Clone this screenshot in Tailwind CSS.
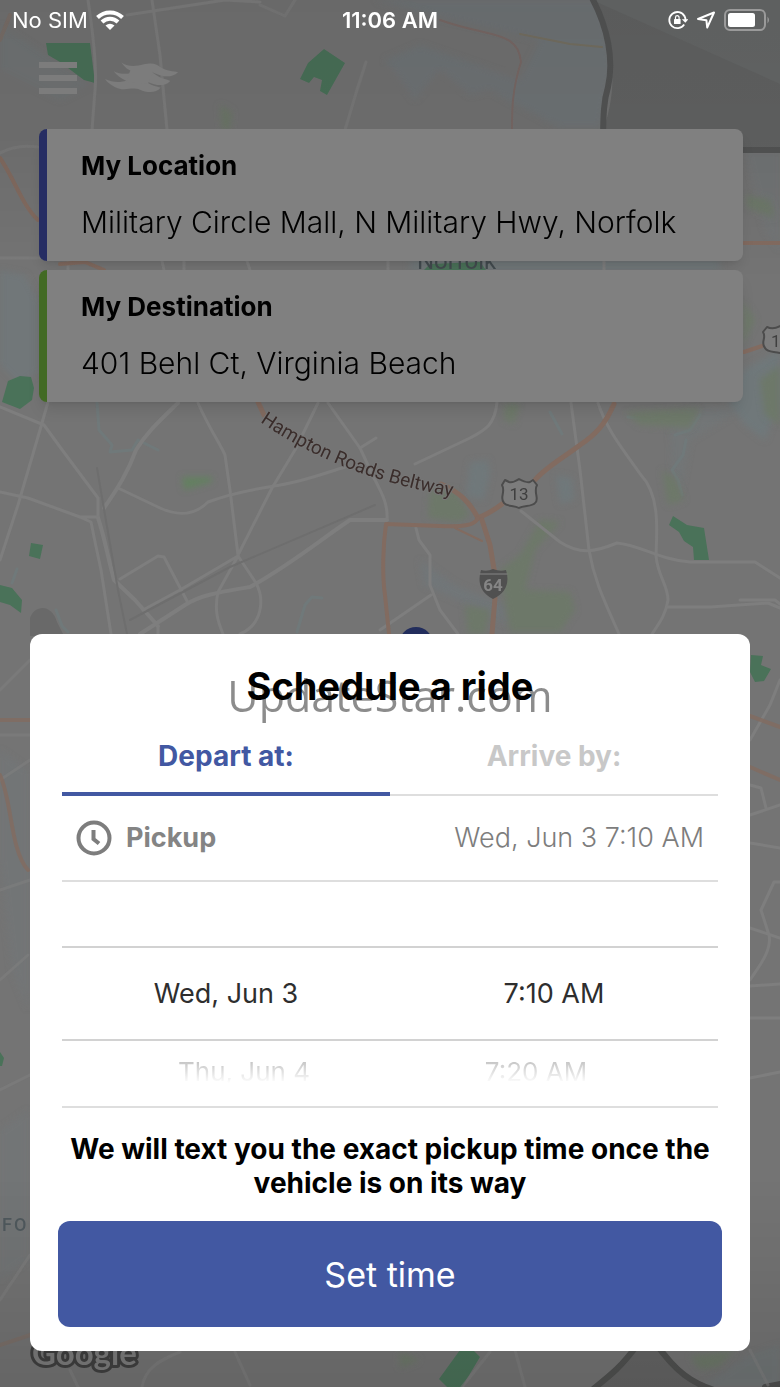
<!DOCTYPE html>
<html lang="en">
<head>
  <meta charset="UTF-8" />
  <meta name="viewport" content="width=device-width, initial-scale=1.0"/>
  <title>Schedule a ride</title>
  <script src="https://cdn.jsdelivr.net/npm/@tailwindcss/browser@4"></script>
</head>
<body class="relative min-h-screen overflow-x-hidden bg-[#717171] font-['Inter',sans-serif] text-black">

  <!-- Map -->
  <svg class="absolute inset-0 w-full h-full" viewBox="0 0 780 1387" preserveAspectRatio="xMidYMin slice" fill="none" stroke-linecap="round" stroke-linejoin="round" aria-hidden="true">
    <defs>
      <linearGradient id="shade" x1="0" y1="0" x2="0" y2="1">
        <stop offset="0" stop-color="#000" stop-opacity=".09"/>
        <stop offset=".1" stop-color="#000" stop-opacity=".07"/>
        <stop offset=".2" stop-color="#000" stop-opacity="0"/>
        <stop offset=".85" stop-color="#000" stop-opacity="0"/>
        <stop offset="1" stop-color="#000" stop-opacity=".12"/>
      </linearGradient>
      <filter id="soft" x="-20%" y="-20%" width="140%" height="140%"><feGaussianBlur stdDeviation="3"/></filter>
      <path id="beltway" d="M260 422 Q300 449 345 467 T450 496"/>
    </defs>
    <rect width="780" height="1387" fill="#747474"/>

    <!-- Water -->
    <g fill="#70787a" filter="url(#soft)">
      <path d="M0 25 L30 45 L90 85 L60 100 L0 70Z" opacity=".5"/>
      <path d="M375 0 H602 L612 70 L600 128 H560 L490 90 L470 95 L440 70 L415 100 L385 60 L420 45 L520 80 L540 40 L450 20Z" opacity=".7"/>
      <path d="M0 270 L25 275 L38 300 V372 L20 385 L0 365Z" opacity=".8"/>
      <path d="M745 150 H780 V250 L765 230Z" opacity=".4"/>
      <path d="M743 370 L780 350 V400 L765 440 L745 425 L728 402Z"/>
      <path d="M670 415 L705 408 L740 410 L690 440 L680 495 L672 470Z" opacity=".5"/>
      <path d="M470 462 L488 460 L490 475 L484 500 L466 496Z"/>
      <path d="M556 475 L572 478 L574 500 L560 504Z"/>
      <path d="M420 560 L455 585 L505 605 L508 625 L480 610 L424 585Z" opacity=".7"/>
      <path d="M700 1387 L750 1355 L780 1345 V1387Z" opacity=".6"/>
      <path d="M0 750 L28 770 V1010 L12 970 L0 860Z" opacity=".4"/>
      <path d="M0 1130 L28 1110 V1260 L0 1280Z" opacity=".4"/>
      <path d="M410 261 H720 V270 H410Z"/>
    </g>
    <g stroke="#70797a" stroke-width="3">
      <path d="M97 403 L99 430 L112 445 L110 452 L132 450 L138 440 L158 450"/>
      <path d="M297 632 L305 605 L312 597 L322 598"/>
      <path d="M550 412 L562 434"/>
      <path d="M628 417 L650 420 L668 414 M675 435 L690 430 L700 415 M686 440 L683 455 L672 470 L678 480 L682 495"/>
      <path d="M12 583 L17 569 M56 610 L62 626 L68 632"/>
    </g>

    <!-- Restricted area -->
    <path d="M592 0 C612 35 620 80 604 128 L604 150 H780 V0Z" fill="#636464"/>
    <path d="M592 0 L780 84 V0Z" fill="#676969"/>
    <path d="M592 -2 C608 28 614 60 608 87 C604 100 603 112 603 150 H780" stroke="#545555" stroke-width="6"/>
    <path d="M30 618 C35 604 52 604 57 622 L64 636 H30Z" fill="#696969"/>
    <path d="M598 1387 C612 1376 622 1366 636 1346 H662 C680 1372 696 1383 714 1390Z" fill="#646464"/>
    <path d="M592 1390 C612 1374 622 1366 638 1344 M656 1344 C676 1372 692 1383 714 1390 M765 1387 L785 1383" stroke="#505150" stroke-width="6"/>

    <!-- Parks -->
    <g fill="#6d7869" filter="url(#soft)">
      <path d="M182 477 H212 V482 L184 490Z" fill="#648060"/>
      <path d="M430 490 L455 490 L470 515 L458 522 L428 518Z"/>
      <path d="M505 404 H520 L514 424 L504 420Z"/>
      <path d="M540 520 L560 522 L535 550 L525 590 L570 592 L575 610 L560 632 H510 L500 570 L520 555Z"/>
      <path d="M662 470 L675 478 L684 500 L668 505Z M625 412 L700 408 L690 428 L640 425Z"/>
      <path d="M745 195 L770 200 L775 218 L748 208Z M743 300 L755 320 L743 345Z M760 380 L780 365 V425 L765 415Z"/>
      <path d="M690 1356 L735 1350 L720 1366 L700 1370Z M400 1352 L420 1360 L400 1368Z"/>
      <path d="M220 105 L232 112 L230 130 H222Z M465 605 L490 610 L485 634 H468Z"/>
    </g>
    <g fill="#4a7259">
      <path d="M46 43 H90 L95 83 L84 80 L60 62 L48 55Z"/>
      <path d="M324 49 L345 63 L327 95 L320 91 L322 80 L314 77 L309 83 L300 79 L308 63Z"/>
      <path d="M8 381 L20 376 L31 377 L34 388 L32 400 L20 409 L2 402Z"/>
      <path d="M31 543 L43 545 L40 559 L29 556Z"/>
      <path d="M0 585 L12 588 L22 600 L21 613 L10 605 L0 602Z"/>
      <path d="M673 516 L687 525 L704 528 L709 560 H694 L693 547 L684 541 L679 532 L669 525Z"/>
      <path d="M751 655 L763 656 L761 665 L771 669 L764 681 L755 682 L750 672Z"/>
      <path d="M460 1350 H473 L480 1357 L462 1387 H447 L439 1379Z"/>
      <path d="M424 270 L430 264 L480 262 L486 270Z"/>
      <path d="M0 1052 L4 1058 L2 1066 H0Z"/>
    </g>

    <!-- Streets -->
    <g stroke="#7e7e7e" stroke-width="3">
      <path d="M88 0 C94 40 97 70 95 90 L92 130 M152 0 L160 55 L167 130 M127 15 L225 0 L260 2"/>
      <path d="M260 5 L285 16 L295 0 M366 62 L357 90 L345 130 M0 153 Q16 144 38 147 M0 258 H40" opacity=".7"/>
      <path d="M68 261 V270 M162 261 L164 270 M184 261 V270 M247 261 L250 270 M388 261 V270 M604 261 V270"/>
      <path d="M48 402 L40 430 L18 505 L0 560 M0 407 L44 425 L60 447 L98 498 V518"/>
      <path d="M178 403 C155 425 145 435 136 450 C128 472 118 488 104 508" stroke-width="4"/>
      <path d="M0 492 L28 498 L80 517 H98 M80 517 L91 522 L94 537 L101 570 L111 634"/>
      <path d="M98 518 C104 535 108 558 114 580 L135 600 L158 626" stroke-width="4"/>
      <path d="M118 488 L160 508 C180 517 195 515 208 502 C240 490 265 488 280 485 C305 481 325 473 345 467"/>
      <path d="M198 403 C210 430 218 440 225 455 L230 490 L238 555 M318 403 L295 450 L272 488 L238 555 M328 403 L360 448 L374 478"/>
      <path d="M374 478 C383 495 388 505 387 520 M360 448 L376 438"/>
      <path d="M387 520 L350 520 C320 540 290 565 250 587 C220 592 200 595 185 605 L140 634" stroke-width="4"/>
      <path d="M120 579 L158 556 L164 557 L187 601 M143 610 L180 590 L238 556 L256 583 C265 600 262 625 240 634 M238 556 L218 592 C214 610 218 622 223 634 M158 626 V634"/>
      <path d="M497 402 C495 425 485 430 470 438 L415 464 M571 403 L580 470 L589 550 C594 580 604 600 619 634 M598 403 C607 430 622 448 641 475 C660 495 657 530 656 555 C657 575 668 585 668 600 C666 615 658 625 652 634"/>
      <path d="M521 511 L560 542 C580 555 595 552 617 543 C640 545 660 560 690 562 H755 L780 578 M668 607 H710 L768 603 L780 608"/>
      <path d="M416 528 L419 540 L430 555 V585 L440 610 L458 634 M431 595 L380 630"/>
      <path d="M740 600 H775 L780 604 M780 680 L770 705 L750 740 M750 785 L761 788 L766 808 M750 815 L780 805 M750 843 L780 848 M780 882 H774 L761 910 L769 935 C772 950 760 965 750 980 M750 928 L780 938 M750 986 L780 984 M750 1018 H780 M750 1078 L780 1072"/>
      <path d="M0 690 L30 660 M0 735 H30 M0 780 L30 760 M0 890 L30 880 M0 980 L28 955 M0 1090 L30 1075 M0 1300 L30 1255 M70 1370 L78 1387 M142 1387 C145 1368 160 1360 180 1352 M235 1352 L250 1385 M515 1350 L525 1387 M750 1350 L768 1385 M490 1352 L462 1387" opacity=".6"/>
    </g>
    <g stroke="#6e6e6e" stroke-width="2">
      <path d="M97 468 L105 515 L118 590 L127 634 M130 620 L230 567 L375 505"/>
    </g>

    <!-- Highways -->
    <g stroke="#826b60" stroke-width="4">
      <path d="M0 158 C15 180 22 205 38 220 M60 264 L85 262 L104 270 M744 243 H780 M744 352 L762 346"/>
      <path d="M0 40 L10 15" opacity=".5"/>
      <path d="M258 402 L264 415 M441 484 C460 492 470 503 478 518" stroke-width="5"/>
      <path d="M614 404 C605 425 595 435 580 445 C560 460 545 468 535 480 M502 504 C492 512 485 515 478 518" stroke-width="5"/>
      <path d="M478 518 C475 525 465 527 440 526 L386 524 C383 545 382 575 385 595 L389 634"/>
      <path d="M482 520 L490 545 L495 575 M495 598 L492 634" stroke-width="5"/>
      <path d="M455 528 L482 541" stroke-width="2"/>
      <path d="M750 716 L780 727 M750 767 L780 780 M0 720 H30 M0 775 C12 800 10 850 28 870" opacity=".8"/>
      <path d="M0 1345 L60 1325" opacity=".5"/>
    </g>
    <path d="M440 20 C490 38 518 30 521 62 C512 90 512 110 512 130" stroke="#7a6a67" stroke-width="2"/>
    <path d="M520 34 L570 44 L602 47" stroke="#767163" stroke-width="2"/>
    <rect width="780" height="1387" fill="url(#shade)"/>

    <!-- Labels -->
    <g font-family="Roboto, sans-serif">
      <text font-size="19" fill="#3a2d2b" stroke="#777" stroke-width="2" paint-order="stroke"><textPath href="#beltway">Hampton Roads Beltway</textPath></text>
      <text x="417" y="269" font-size="24" fill="#434b4f">Norfolk</text>
      <text x="2" y="1231" font-size="18" font-weight="500" fill="#4d565a" letter-spacing="2">FO</text>
      <path d="M505 480 L509 482 Q513 483 519 479 Q526 483 530 482 L533 480 L537 485 C533 492 540 500 535 503 C532 507 524 505 519 508 C514 505 507 507 504 503 C499 498 506 492 502 485Z" fill="#7c7c7c" stroke="#4c4c4c" stroke-width="2"/>
      <text x="519" y="500" font-size="17" text-anchor="middle" fill="#3f3f3f">13</text>
      <path d="M767 327 Q773 330 780 326 L800 340 L780 353 C774 351 768 353 765 348 C760 342 767 338 763 332Z" fill="#7c7c7c" stroke="#4c4c4c" stroke-width="2"/>
      <text x="771" y="347" font-size="17" fill="#3f3f3f">1</text>
      <path d="M481 570 Q487 572 493 569 Q500 572 506 570 Q512 590 493 599 Q475 590 481 570Z" fill="#505050"/>
      <path d="M480 574 H507" stroke="#858585" stroke-width="1"/>
      <text x="493" y="591" font-size="17" font-weight="700" text-anchor="middle" fill="#858585">64</text>
      <text x="32" y="1365" font-family="Lato, sans-serif" font-size="33" font-weight="700" fill="#6f6f6f" stroke="#393939" stroke-width="6" paint-order="stroke">Google</text>
    </g>
    <circle cx="416" cy="644" r="17" fill="#222d5c"/>
  </svg>

  <div class="relative">
    <!-- Status bar -->
    <div class="grid grid-cols-3 items-center h-10 px-3 text-[22px] text-white">
      <div class="flex items-center gap-2">
        <span>No SIM</span>
        <svg class="w-7 h-5" viewBox="0 0 28 20" fill="none" stroke="#fff" stroke-width="4">
          <path d="M1.500 7.500 A18 18 0 0 1 26.500 7.500"/>
          <path d="M6 12 A11.500 11.500 0 0 1 22 12"/>
          <path d="M14 20 L9.500 15.500 Q14 11.800 18.500 15.500Z" fill="#fff" stroke="none"/>
        </svg>
      </div>
      <div class="text-center font-semibold">11:06 AM</div>
      <div class="flex justify-end items-center gap-2">
        <svg class="w-5 h-5" viewBox="0 0 20 20" fill="none" stroke="#fff" stroke-width="1.800">
          <path d="M16.500 6.200 A8.100 8.100 0 1 0 16.200 14.500"/>
          <path d="M17.300 12.700 L13.800 9.200 H20.400Z" fill="#fff" stroke="none"/>
          <path d="M16.500 6 Q17.500 8 17.500 10"/>
          <rect x="6" y="9" width="6.600" height="5" rx=".6" fill="#fff" stroke="none"/>
          <path d="M7.500 9.500 V7.500 A1.800 1.800 0 0 1 11.100 7.500 V9.500" stroke-width="1.200"/>
        </svg>
        <svg class="w-5 h-5" viewBox="0 0 20 20" fill="none" stroke="#fff" stroke-width="2" stroke-linejoin="round">
          <path d="M18 2.500 L11.200 17.500 L10.400 10.200 L2 9Z"/>
        </svg>
        <svg class="w-12 h-6 -mr-1" viewBox="0 0 48 24" fill="none">
          <rect x="1" y="2" width="40" height="20" rx="5" stroke="#9a9a9a" stroke-width="2"/>
          <rect x="4" y="5" width="27" height="14" rx="2.500" fill="#fff"/>
          <path d="M43.500 8.500 Q46.500 12 43.500 15.500Z" fill="#9a9a9a"/>
        </svg>
      </div>
    </div>

    <!-- Top bar -->
    <header class="flex items-center gap-7 px-[39px] pt-5 pb-[33px]">
      <button type="button" aria-label="Menu" class="flex flex-col justify-between w-[38px] h-8 my-[2px]">
        <span class="w-full h-[6px] bg-[#7c7c7c]"></span>
        <span class="w-full h-[6px] bg-[#7c7c7c]"></span>
        <span class="w-full h-[6px] bg-[#7c7c7c]"></span>
      </button>
      <svg class="w-[74px] h-8" viewBox="0 0 76 32" fill="#7c7c7c" aria-hidden="true">
        <path d="M17 0 C24 5 32 4 40 2 C47 0 53 1 57 5 C63 9 70 9 75 10 C68 16 60 15 51 11 C43 8 36 12 30 10 C24 8 20 5 17 0Z"/>
        <path d="M9 9 C17 13 25 12 33 9 C41 7 46 8 51 12 C57 17 62 17 67 19 C61 25 53 24 44 20 C36 17 28 21 22 19 C16 16 12 13 9 9Z"/>
        <path d="M0 17 C8 21 16 21 24 18 C32 15 38 16 43 20 C47 24 53 24 57 26 C52 32 43 31 36 28 C28 25 22 29 15 27 C8 25 3 21 0 17Z"/>
        <path d="M26 8 L50 8 L44 22 L22 20Z"/>
      </svg>
    </header>

    <!-- Trip addresses -->
    <section class="flex flex-col gap-[9px] ml-[39px] mr-[37px]">
      <div class="flex flex-col gap-4 h-[132px] pl-[34px] pr-6 pt-[21px] bg-[#808080] border-l-8 border-[#262d63] rounded-lg shadow-lg">
        <label for="location" class="text-[26px] leading-8 font-bold">My Location</label>
        <input id="location" type="text" readonly value="Military Circle Mall, N Military Hwy, Norfolk" class="w-full text-[30px] leading-12 font-light outline-none" />
      </div>
      <div class="flex flex-col gap-4 h-[132px] pl-[34px] pr-6 pt-[21px] bg-[#808080] border-l-8 border-[#426a24] rounded-lg shadow-lg">
        <label for="destination" class="text-[26px] leading-8 font-bold">My Destination</label>
        <input id="destination" type="text" readonly value="401 Behl Ct, Virginia Beach" class="w-full text-[30px] leading-12 font-light outline-none" />
      </div>
    </section>

    <!-- Schedule dialog -->
    <main role="dialog" aria-labelledby="dialogTitle" class="relative mt-[232px] mx-[30px] px-7 pt-8 pb-6 bg-white rounded-xl">
      <h1 id="dialogTitle" class="text-[38px] leading-10 font-bold text-center">Schedule a ride</h1>
      <div class="absolute inset-x-0 top-8 text-center font-['Open_Sans',sans-serif] text-[43px] leading-[60px] text-black/45 pointer-events-none">UpdateStar.com</div>

      <div class="mx-1">
        <div class="grid grid-cols-2 mt-[13px] text-[28px] leading-10 font-bold">
          <button type="button" id="departTab" onclick="selectTab('depart')" class="h-[77px] pt-1 pb-1 border-b-4 border-[#4258a2] text-[#4258a2]">Depart at:</button>
          <button type="button" id="arriveTab" onclick="selectTab('arrive')" class="h-[77px] pt-1 pb-[6px] border-b-2 border-[#dedede] text-[#c8c8c8]">Arrive by:</button>
        </div>

        <div class="flex items-center h-[86px] px-[14px] border-b-2 border-[#dedede] text-[27px]">
          <svg class="w-9 h-9 mr-[14px]" viewBox="0 0 36 36" fill="none" stroke="#7d7d7d" stroke-width="4">
            <circle cx="18" cy="18" r="15.500"/>
            <path d="M17.500 10 V19 L23 23.500"/>
          </svg>
          <span class="font-bold text-[#848484]">Pickup</span>
          <span class="ml-auto font-light text-[#7d7d7d]">Wed, Jun 3 7:10 AM</span>
        </div>

        <!-- Time wheel -->
        <div class="border-b-2 border-[#dedede] text-center">
          <div class="h-16"></div>
          <div class="grid grid-cols-2 items-center h-[95px] pt-[2px] border-y-2 border-[#d2d2d2] text-[27px] text-[#2e2e2e]">
            <span>Wed, Jun 3</span>
            <span>7:10 AM</span>
          </div>
          <div class="grid grid-cols-2 items-center h-[65px] pb-1 text-[26px] leading-8">
            <span class="pl-9 bg-linear-to-b from-[#b8b8b8] to-white to-85% bg-clip-text text-transparent">Thu, Jun 4</span>
            <span class="pr-9 bg-linear-to-b from-[#b8b8b8] to-white to-85% bg-clip-text text-transparent">7:20 AM</span>
          </div>
        </div>

        <p class="mt-6 text-[28px] leading-[34px] font-bold text-center">We will text you the exact pickup time once the vehicle is on its way</p>
      </div>

      <button type="button" class="w-full h-[106px] mt-[21px] rounded-xl bg-[#4258a2] text-[34px] text-white">Set time</button>
    </main>
  </div>

  <script>
    function selectTab(name) {
      document.getElementById("departTab").setAttribute("aria-pressed", name === 'depart');
      document.getElementById("arriveTab").setAttribute("aria-pressed", name === 'arrive');
    }
  </script>
</body>
</html>
